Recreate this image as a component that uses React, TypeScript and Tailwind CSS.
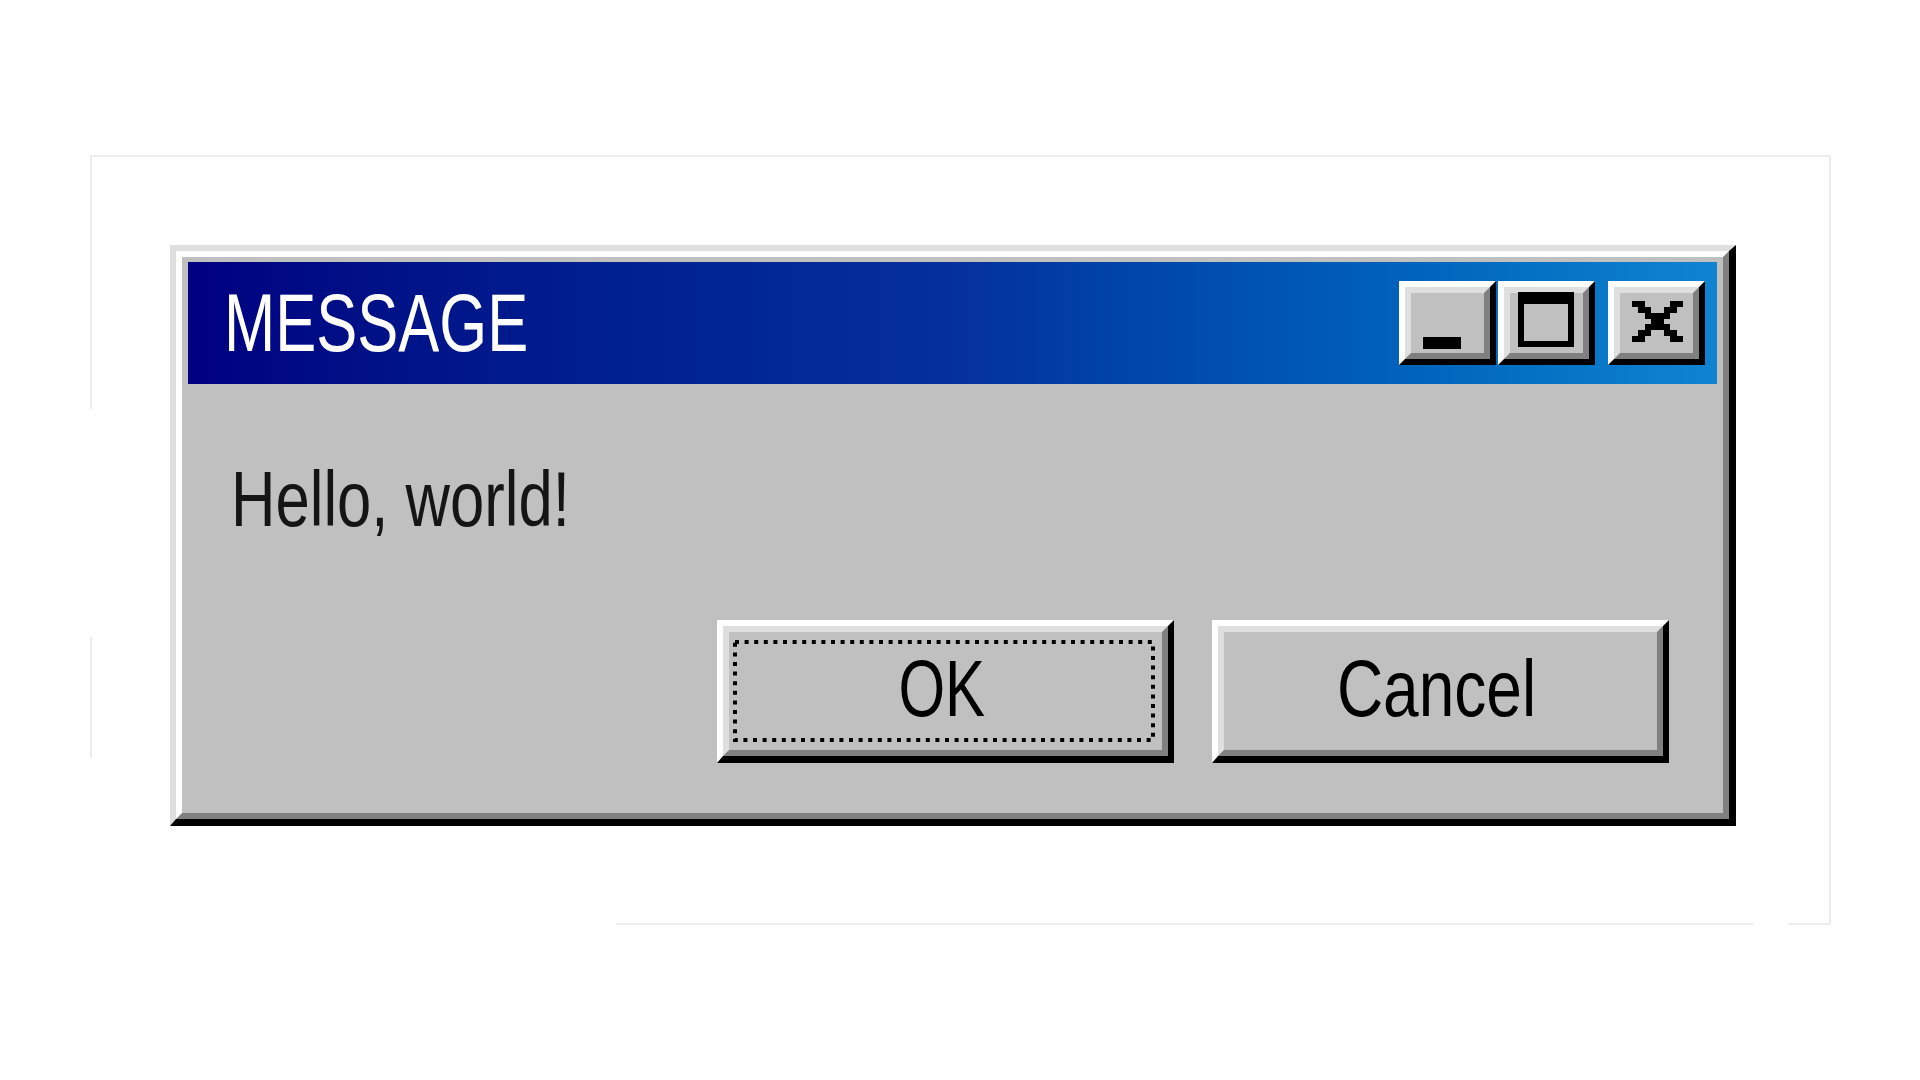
import type { ReactNode } from "react"

const face = "font-['Liberation_Sans','Arial',sans-serif]"

function TitleButton({ children }: { children: ReactNode }) {
  return (
    <div className="relative h-[84px] w-[97px] border-[6px] border-t-white border-l-white border-r-black border-b-black">
      <div className="h-full w-full border-[6px] border-t-[#dfdfdf] border-l-[#dfdfdf] border-r-[#808080] border-b-[#808080] bg-[#c0c0c0]" />
      <svg
        className="absolute left-[-6px] top-[-6px]"
        width="97"
        height="84"
        viewBox="0 0 97 84"
        shapeRendering="crispEdges"
      >
        {children}
      </svg>
    </div>
  )
}

function PushButton({ label, squeeze, focused }: { label: string; squeeze: string; focused?: boolean }) {
  return (
    <div className="relative h-[143px] w-[457px] border-[6px] border-b-[7px] border-t-white border-l-white border-r-black border-b-black">
      <div className="flex h-full w-full items-center justify-center border-[6px] border-t-[#dfdfdf] border-l-[#dfdfdf] border-r-[#808080] border-b-[#808080] bg-[#c0c0c0] pb-[4px] pr-[8px]">
        <span className={`${face} ${squeeze} inline-block origin-center text-[80px] leading-none text-black`}>
          {label}
        </span>
      </div>
      {focused && (
        <svg className="absolute left-[10px] top-[14px]" width="422" height="102" viewBox="0 0 422 102">
          <rect
            x="2"
            y="2"
            width="418"
            height="98"
            fill="none"
            stroke="#000"
            strokeWidth="4"
            strokeDasharray="4 5.6"
          />
        </svg>
      )}
    </div>
  )
}

// 8x7 pixel cross, scaled up like the rest of the dialog
const cross = [
  [0, 0, 2], [6, 0, 2],
  [1, 1, 2], [5, 1, 2],
  [2, 2, 4],
  [3, 3, 2],
  [2, 4, 4],
  [1, 5, 2], [5, 5, 2],
  [0, 6, 2], [6, 6, 2],
]

export default function App() {
  return (
    <div className="min-h-screen w-full overflow-hidden bg-white pl-[90px] pt-[155px]">
      <div className="relative h-[770px] w-[1741px] border-t-2 border-r-2 border-[#ececec] pl-[80px] pt-[88px]">
        {/* the faint outer frame is broken on the left and bottom */}
        <span className="absolute left-0 top-[-2px] h-[254px] w-[2px] bg-[#ececec]" />
        <span className="absolute left-0 top-[480px] h-[121px] w-[2px] bg-[#ececec]" />
        <span className="absolute bottom-0 left-[526px] h-[2px] w-[1137px] bg-[#ececec]" />
        <span className="absolute bottom-0 left-[1698px] h-[2px] w-[42px] bg-[#ececec]" />

        <div className="w-[1566px] border-[6px] border-r-[7px] border-b-[7px] border-t-[#dfdfdf] border-l-[#dfdfdf] border-r-black border-b-black">
          <div className="border-[6px] border-t-white border-l-white border-r-[#808080] border-b-[#808080] bg-[#c0c0c0]">
            <div className="px-[6px] pt-[5px]">
              <div className="flex h-[122px] items-center bg-linear-to-r from-[#000080] via-[#05309c] via-50% to-[#1084d0] pl-[36px] pr-[12px]">
                <span className={`${face} inline-block origin-left scale-x-[0.75] text-[82px] leading-none text-white`}>
                  MESSAGE
                </span>
                <div className="ml-auto flex items-center">
                  <TitleButton>
                    <rect x="24" y="56" width="38" height="12" fill="#000" />
                  </TitleButton>
                  <div className="ml-[2px]">
                    <TitleButton>
                      <rect x="20" y="11" width="56" height="12" fill="#000" />
                      <rect x="20" y="11" width="6" height="55" fill="#000" />
                      <rect x="70" y="11" width="6" height="55" fill="#000" />
                      <rect x="20" y="60" width="56" height="6" fill="#000" />
                    </TitleButton>
                  </div>
                  <div className="ml-[13px]">
                    <TitleButton>
                      <g transform="translate(24 20) scale(6.375 5.857)">
                        {cross.map(([x, y, w], i) => (
                          <rect key={i} x={x} y={y} width={w} height="1" fill="#000" />
                        ))}
                      </g>
                    </TitleButton>
                  </div>
                </div>
              </div>
            </div>

            <div className="h-[429px] pl-[49px] pt-[77px]">
              <span className={`${face} inline-block origin-left scale-x-[0.8] text-[77px] leading-none text-[#151515]`}>
                Hello, world!
              </span>
              <div className="mt-[82px] flex justify-end gap-[38px] pr-[54px]">
                <PushButton label="OK" squeeze="scale-x-[0.75]" focused />
                <PushButton label="Cancel" squeeze="scale-x-[0.8]" />
              </div>
            </div>
          </div>
        </div>
      </div>
    </div>
  )
}
